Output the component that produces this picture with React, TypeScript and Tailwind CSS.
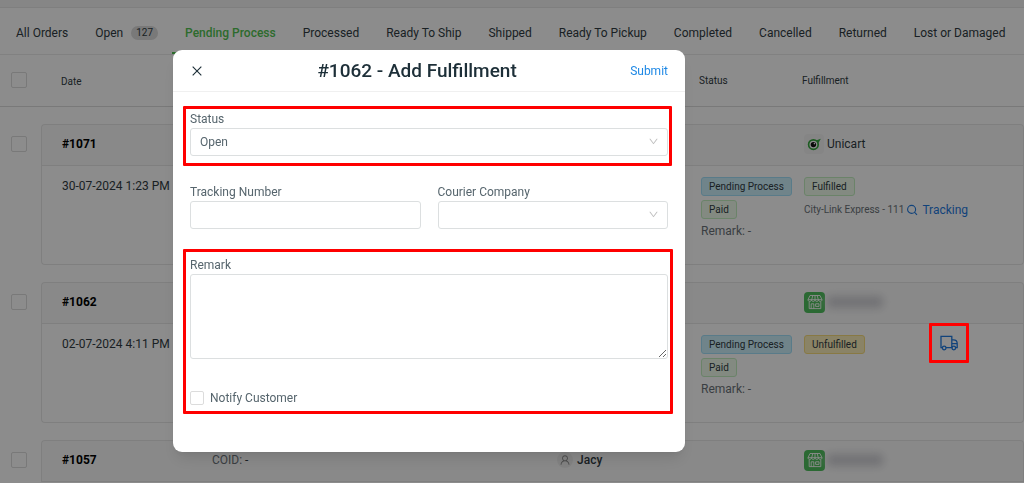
import clsx from "clsx";
import type { ReactNode } from "react";
import { AiOutlineClose, AiOutlineDown, AiOutlineUser } from "react-icons/ai";

const TABS = [
  { label: "All Orders" },
  { label: "Open", count: 127 },
  { label: "Pending Process", active: true },
  { label: "Processed" },
  { label: "Ready To Ship" },
  { label: "Shipped" },
  { label: "Ready To Pickup" },
  { label: "Completed" },
  { label: "Cancelled" },
  { label: "Returned" },
  { label: "Lost or Damaged" },
];

type Order = {
  id: string;
  date?: string;
  customer?: string;
  channel: "unicart" | "store";
  fulfilled?: boolean;
};

const ORDERS: Order[] = [
  { id: "#1071", date: "30-07-2024 1:23 PM", channel: "unicart", fulfilled: true },
  { id: "#1062", date: "02-07-2024 4:11 PM", channel: "store" },
  { id: "#1057", customer: "Jacy", channel: "store" },
];

const TAG_COLORS = {
  blue: "border-[#a3e0fa] bg-[#cdf0fc]",
  green: "border-[#c3efc0] bg-[#eefbec]",
  gold: "border-[#f7dc7c] bg-[#fbeebb]",
};

function Tag({ color, children }: { color: keyof typeof TAG_COLORS; children: ReactNode }) {
  return (
    <span
      className={clsx(
        "inline-flex h-[19px] items-center rounded-[3px] border px-[7px] text-[10px] whitespace-nowrap text-[#303b42]",
        TAG_COLORS[color],
      )}
    >
      {children}
    </span>
  );
}

function Highlight({ className }: { className: string }) {
  return (
    <span
      className={clsx("pointer-events-none absolute z-20 rounded-[1px] border-3 border-[#ff0000]", className)}
    />
  );
}

function SearchIcon() {
  return (
    <svg viewBox="0 0 12 12" className="size-3" fill="none" stroke="currentColor" strokeWidth="1.1">
      <circle cx="5.6" cy="5.4" r="4" />
      <path d="M8.4 8.2 11 10.8" />
    </svg>
  );
}

function TruckIcon() {
  return (
    <svg viewBox="0 0 18 16" className="h-4 w-[18px]" fill="none" stroke="currentColor" strokeWidth="1.3">
      <path d="M2.4 12.6H1V1.4h10.8v11.2M6 12.6h6M11.8 4.8h1.6c2.2 0 3.8 1.5 3.8 3.8v4h-1.6M11.8 8.6h5.2" />
      <circle cx="4.2" cy="13" r="1.8" />
      <circle cx="13.8" cy="13" r="1.8" />
    </svg>
  );
}

function StoreIcon() {
  return (
    <span className="flex size-[21px] items-center justify-center rounded-[4px] bg-[#4fc05d] text-white">
      <svg viewBox="0 0 16 16" className="size-4" fill="none" stroke="currentColor" strokeWidth="0.9">
        <path d="M3 1.5h10l2 4.2H1zM5.8 1.5 4.7 5.7M8 1.5v4.2M10.2 1.5l1.1 4.2" />
        <path d="M1 5.7c0 2.3 3.5 2.3 3.5 0 0 2.3 3.5 2.3 3.5 0 0 2.3 3.5 2.3 3.5 0 0 2.3 3.5 2.3 3.5 0" />
        <path d="M2.2 7.6v7h11.6v-7M4.2 14.6V9.8h2.6v4.8M8.6 9.8h3.4v2.6H8.6z" />
      </svg>
    </span>
  );
}

function UnicartIcon() {
  return (
    <span className="flex size-5 items-center justify-center rounded-[4px] bg-[#f3f3f3]">
      <svg viewBox="0 0 14 14" className="size-3.5">
        <circle cx="6.4" cy="7.6" r="4.8" fill="#fff" stroke="#35a83e" strokeWidth="1.7" />
        <circle cx="6.4" cy="7.6" r="2.7" fill="#111" />
        <circle cx="7.4" cy="6.6" r="0.8" fill="#fff" />
        <path d="M9 3.4 13.8 1.8 11.6 5.8z" fill="#35a83e" />
      </svg>
    </span>
  );
}

function Checkbox({ id, label, className }: { id?: string; label?: string; className: string }) {
  return (
    <input
      id={id}
      type="checkbox"
      aria-label={label}
      className={clsx("block appearance-none rounded-[2px] border border-[#dcdcdc] bg-white", className)}
    />
  );
}

function OrderRows({ order }: { order: Order }) {
  const head = "h-[42px] border-t border-b border-[#e8e8e8] bg-[#fafafa] p-0 pb-0.5";
  const body = "h-[99px] border-b border-[#e8e8e8] p-0 pt-[11px] align-top";

  return (
    <tbody>
      <tr aria-hidden="true">
        <td colSpan={6} className="h-[17px] p-0" />
      </tr>
      <tr>
        <td className="p-0 pb-0.5 pl-[11px]">
          <Checkbox label={`Select order ${order.id}`} className="size-4" />
        </td>
        <td className={clsx(head, "rounded-tl-[4px] border-l pl-5 font-bold text-black")}>{order.id}</td>
        <td className={clsx(head, "pl-5 text-[#6b7278]")}>
          {order.customer && (
            <>
              COID: <span className="text-[#303b42]">-</span>
            </>
          )}
        </td>
        <td className={clsx(head, "pl-5")}>
          {order.customer && (
            <div className="flex items-center gap-1 font-medium">
              <span className="flex size-4 items-center justify-center rounded-full bg-[#ededed] text-[#8c8c8c]">
                <AiOutlineUser className="size-3" />
              </span>
              {order.customer}
            </div>
          )}
        </td>
        <td className={head} />
        <td className={clsx(head, "rounded-tr-[4px] border-r pl-3")}>
          {order.channel === "unicart" ? (
            <div className="flex items-center gap-[3px]">
              <UnicartIcon />
              Unicart
            </div>
          ) : (
            <div className="flex items-center gap-0.5">
              <StoreIcon />
              <span className="h-3 w-14 rounded-sm bg-[#cfcfd4] blur-[4px]" />
            </div>
          )}
        </td>
      </tr>
      {order.date && (
        <tr>
          <td className="p-0" />
          <td className={clsx(body, "rounded-bl-[4px] border-l pl-5 leading-[18px] whitespace-nowrap")}>
            {order.date}
          </td>
          <td className={body} />
          <td className={body} />
          <td className={clsx(body, "pl-5")}>
            <div className="flex flex-col items-start gap-1">
              <Tag color="blue">Pending Process</Tag>
              <Tag color="green">Paid</Tag>
              <span className="leading-4 text-[#6b7278]">Remark: -</span>
            </div>
          </td>
          <td className={clsx(body, "rounded-br-[4px] border-r pl-3")}>
            {order.fulfilled ? (
              <div className="flex flex-col items-start gap-1">
                <Tag color="green">Fulfilled</Tag>
                <div className="flex h-5 items-center gap-0.5 whitespace-nowrap">
                  <span className="text-[10px] text-[#6b7278]">City-Link Express - 111</span>
                  <a href="#tracking" className="flex items-center gap-1 text-[#1f7ae0]">
                    <SearchIcon />
                    Tracking
                  </a>
                </div>
              </div>
            ) : (
              <div className="flex items-start justify-between pr-[65px]">
                <Tag color="gold">Unfulfilled</Tag>
                <button type="button" aria-label="Add fulfillment" className="relative text-[#1f7ae0]">
                  <TruckIcon />
                  <Highlight className="-inset-x-[11px] -inset-y-3" />
                </button>
              </div>
            )}
          </td>
        </tr>
      )}
    </tbody>
  );
}

function OrdersPage() {
  return (
    <main className="text-xs text-[#303b42]">
      <div className="h-2 border-b border-[#e8e8e8] bg-[#f5f5f5]" />
      <nav className="flex h-[47px] items-stretch gap-px border-b border-[#ececec] pl-[3px]">
        {TABS.map((tab) => (
          <a
            key={tab.label}
            href="#orders"
            className={clsx(
              "flex items-center px-[13px] whitespace-nowrap",
              tab.active ? "border-b-2 border-[#52c452] pt-1.5 font-medium text-[#52c452]" : "pt-1",
            )}
          >
            {tab.label}
            {tab.count && (
              <span className="ml-2 rounded-full bg-[#dcdcdc] px-[5px] text-[10px] leading-[14px]">
                {tab.count}
              </span>
            )}
          </a>
        ))}
      </nav>

      <table className="w-full table-fixed border-separate border-spacing-0">
        <colgroup>
          <col className="w-[41px]" />
          <col className="w-[151px]" />
          <col />
          <col className="w-[144px]" />
          <col className="w-[111px]" />
          <col className="w-[232px]" />
        </colgroup>
        <thead>
          <tr className="text-left text-[10px] *:h-[52px] *:border-b *:border-[#dcdcdc] *:p-0 *:font-normal">
            <th>
              <Checkbox label="Select all orders" className="mb-0.5 ml-[11px] size-4" />
            </th>
            <th>
              <span className="block pt-0.5 pl-5">Date</span>
            </th>
            <th />
            <th />
            <th>
              <span className="block pl-[18px]">Status</span>
            </th>
            <th>
              <span className="block pl-2.5">Fulfillment</span>
            </th>
          </tr>
        </thead>
        {ORDERS.map((order) => (
          <OrderRows key={order.id} order={order} />
        ))}
      </table>
    </main>
  );
}

function SelectField({ id, label, options }: { id: string; label: string; options: string[] }) {
  return (
    <div className="flex-1">
      <label htmlFor={id} className="block leading-[17px]">
        {label}
      </label>
      <div className="relative">
        <select
          id={id}
          className="block h-7 w-full appearance-none rounded-[3px] border border-[#dcdfe0] bg-white px-[9px]"
        >
          {options.map((option) => (
            <option key={option}>{option}</option>
          ))}
        </select>
        <AiOutlineDown className="pointer-events-none absolute top-2 right-[9px] size-[11px] text-[#bfbfbf]" />
      </div>
    </div>
  );
}

function FulfillmentModal() {
  return (
    <div className="fixed inset-0 z-10 flex items-start justify-center bg-black/45 pt-[50px] pr-[166px]">
      <form
        role="dialog"
        aria-labelledby="modal-title"
        className="w-full max-w-[512px] rounded-[9px] bg-white text-xs text-[#56656d] shadow-lg"
      >
        <header className="flex h-[42px] items-center justify-between border-b border-[#f0f0f0] px-[17px] pt-px">
          <button type="button" aria-label="Close" className="text-[#1d2f38]">
            <AiOutlineClose className="size-3.5" />
          </button>
          <h2 id="modal-title" className="text-[19px] font-medium text-[#1d2f38]">
            #1062 - Add Fulfillment
          </h2>
          <button type="button" className="text-[#1e88e5]">
            Submit
          </button>
        </header>

        <div className="flex flex-col gap-7 px-[17px] pt-[19px] pb-[43px]">
          <div className="relative">
            <SelectField id="status" label="Status" options={["Open"]} />
            <Highlight className="-top-[5px] -right-1 -bottom-2.5 -left-[7px]" />
          </div>

          <div className="flex gap-[17px]">
            <div className="flex-1">
              <label htmlFor="tracking-number" className="block leading-[17px]">
                Tracking Number
              </label>
              <input
                id="tracking-number"
                className="block h-7 w-full rounded-[3px] border border-[#dcdfe0] px-[9px]"
              />
            </div>
            <SelectField id="courier" label="Courier Company" options={[""]} />
          </div>

          <div className="relative flex flex-col gap-7">
            <div>
              <label htmlFor="remark" className="block leading-[17px]">
                Remark
              </label>
              <textarea
                id="remark"
                className="block h-[85px] w-full resize rounded-[3px] border border-[#dcdfe0] px-[9px] py-1"
              />
            </div>
            <div className="flex h-[22px] items-center gap-1.5">
              <Checkbox id="notify" className="size-3.5" />
              <label htmlFor="notify">Notify Customer</label>
            </div>
            <Highlight className="-top-2 -right-[5px] -bottom-[5px] -left-[7px]" />
          </div>
        </div>
      </form>
    </div>
  );
}

export default function App() {
  return (
    <div className="h-screen overflow-hidden bg-white font-[Roboto,sans-serif]">
      <OrdersPage />
      <FulfillmentModal />
    </div>
  );
}
